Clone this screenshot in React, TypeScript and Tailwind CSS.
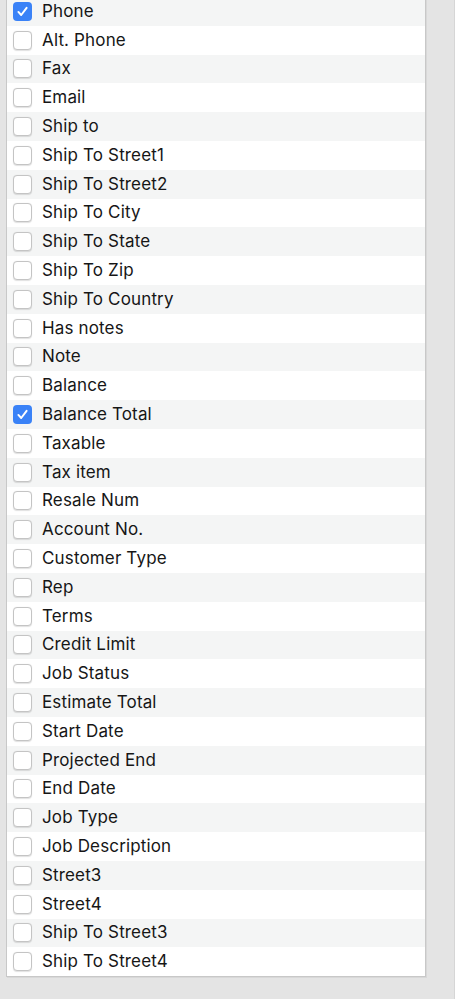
import React from 'react';

const fields: { label: string; checked?: boolean }[] = [
  { label: 'Phone', checked: true },
  { label: 'Alt. Phone' },
  { label: 'Fax' },
  { label: 'Email' },
  { label: 'Ship to' },
  { label: 'Ship To Street1' },
  { label: 'Ship To Street2' },
  { label: 'Ship To City' },
  { label: 'Ship To State' },
  { label: 'Ship To Zip' },
  { label: 'Ship To Country' },
  { label: 'Has notes' },
  { label: 'Note' },
  { label: 'Balance' },
  { label: 'Balance Total', checked: true },
  { label: 'Taxable' },
  { label: 'Tax item' },
  { label: 'Resale Num' },
  { label: 'Account No.' },
  { label: 'Customer Type' },
  { label: 'Rep' },
  { label: 'Terms' },
  { label: 'Credit Limit' },
  { label: 'Job Status' },
  { label: 'Estimate Total' },
  { label: 'Start Date' },
  { label: 'Projected End' },
  { label: 'End Date' },
  { label: 'Job Type' },
  { label: 'Job Description' },
  { label: 'Street3' },
  { label: 'Street4' },
  { label: 'Ship To Street3' },
  { label: 'Ship To Street4' },
];

function Checkbox({ checked }: { checked?: boolean }) {
  if (checked) {
    return (
      <div className="w-[19px] h-[19px] rounded-[4px] bg-[#3a82f7] flex items-center justify-center shrink-0">
        <svg width="13" height="13" viewBox="0 0 12 12" fill="none">
          <path d="M2.2 6.4 L4.8 9.2 L9.8 2.6" stroke="white" strokeWidth="1.8" strokeLinecap="round" strokeLinejoin="round" />
        </svg>
      </div>
    );
  }
  return (
    <div className="w-[19px] h-[19px] rounded-[4px] bg-white border border-[#c4c4c4] shadow-[0_0.5px_1px_rgba(0,0,0,0.12)] shrink-0" />
  );
}

export default function App() {
  return (
    <div className="h-[999px] w-[455px] bg-[#e4e4e4] overflow-hidden pl-[6px] border-r border-[#d6d6d6]">
      <div className="w-[420px] mt-[-3px] border border-[#c8c8c8] border-t-0 bg-white shadow-[1px_1px_0_#d8d8d8]">
        {fields.map((f, i) => (
          <div
            key={f.label}
            className={`h-[28.8px] flex items-center pl-[6px] gap-[10px] ${i % 2 === 0 ? 'bg-[#f4f5f5]' : 'bg-white'}`}
          >
            <Checkbox checked={f.checked} />
            <span className="text-[17px] text-[#161616] leading-none font-['Inter',sans-serif] tracking-[0.15px]">
              {f.label}
            </span>
          </div>
        ))}
      </div>
    </div>
  );
}
